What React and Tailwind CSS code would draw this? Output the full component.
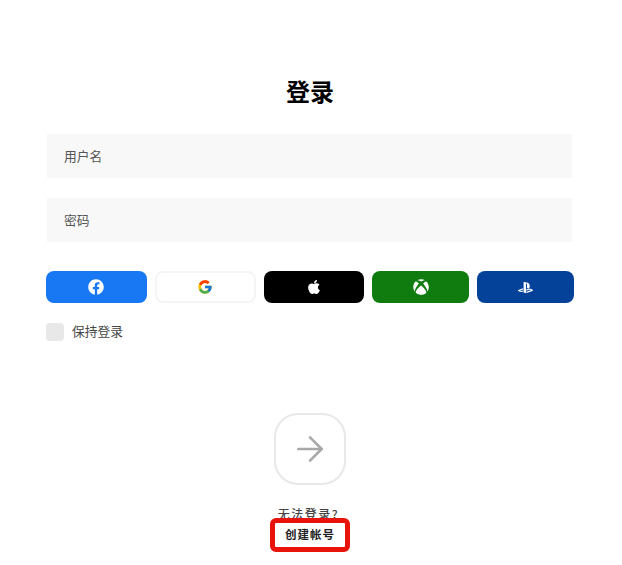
import React from 'react';
import { FaApple, FaFacebook, FaPlaystation, FaXbox } from 'react-icons/fa';
import { FcGoogle } from 'react-icons/fc';
import { ArrowRight } from 'lucide-react';

const font = "font-['Noto_Sans_CJK_SC','Noto_Sans',sans-serif]";

const providers = [
  { id: 'facebook', width: 'w-[101px]', box: 'bg-[#1877f2] pr-[1px]', icon: <FaFacebook className="text-white text-[16px]" /> },
  { id: 'google', width: 'w-[101px]', box: 'bg-white border-2 border-[#f5f5f5] pr-[1px]', icon: <FcGoogle className="text-[16px]" /> },
  { id: 'apple', width: 'w-[100px]', box: 'bg-black pr-[1px]', icon: <FaApple className="text-white text-[16px]" /> },
  { id: 'xbox', width: 'w-[97px]', box: 'bg-[#107c10]', icon: <FaXbox className="text-white text-[16px]" /> },
  { id: 'playstation', width: 'w-[97px]', box: 'bg-[#04429a] pr-[1px]', icon: <FaPlaystation className="text-white text-[15px]" /> },
];

const Field = ({ label }) => (
  <div className="h-11 bg-[#f8f8f8] flex items-center pl-[17px] text-[12.75px] text-[#555]">{label}</div>
);

export default function App() {
  return (
    <div className={`${font} w-[622px] h-[565px] bg-white overflow-hidden flex flex-col`}>
      <h1 className="mt-[73px] h-9 leading-9 text-center text-[24px] font-bold text-black pr-[2px]">登录</h1>

      <div className="mt-[25px] ml-[47px] w-[525px] flex flex-col gap-5">
        <Field label="用户名" />
        <Field label="密码" />
      </div>

      <div className="mt-[29px] ml-[46px] flex gap-2">
        {providers.map((p) => (
          <div key={p.id} className={`${p.width} ${p.box} h-8 rounded-lg flex items-center justify-center`}>
            {p.icon}
          </div>
        ))}
      </div>

      <div className="mt-5 ml-[46px] flex items-center gap-2 h-[18px]">
        <div className="w-[18px] h-[18px] rounded bg-[#e8e8e8]" />
        <span className="text-[12.75px] leading-4 text-[#444] -translate-y-[1px]">保持登录</span>
      </div>

      <div className="mt-[72px] pr-[2px] flex flex-col items-center">
        <div className="w-[72px] h-[72px] rounded-[24px] border-2 border-[#e8e8e8] flex items-center justify-center">
          <ArrowRight className="text-[#a8a8a8]" size={40} strokeWidth={1.5} />
        </div>
        <span className="mt-[20px] mr-[3px] h-[18px] leading-[18px] text-[12px] font-medium text-[#444] tracking-[1.5px]">无法登录?</span>
        <div className="-mt-[5px] relative w-[80px] h-[34px] border-[5px] border-[#e8140c] rounded-md bg-white flex items-center justify-center text-[11.5px] font-bold text-[#222] tracking-[1px]">
          创建帐号
        </div>
      </div>
    </div>
  );
}
